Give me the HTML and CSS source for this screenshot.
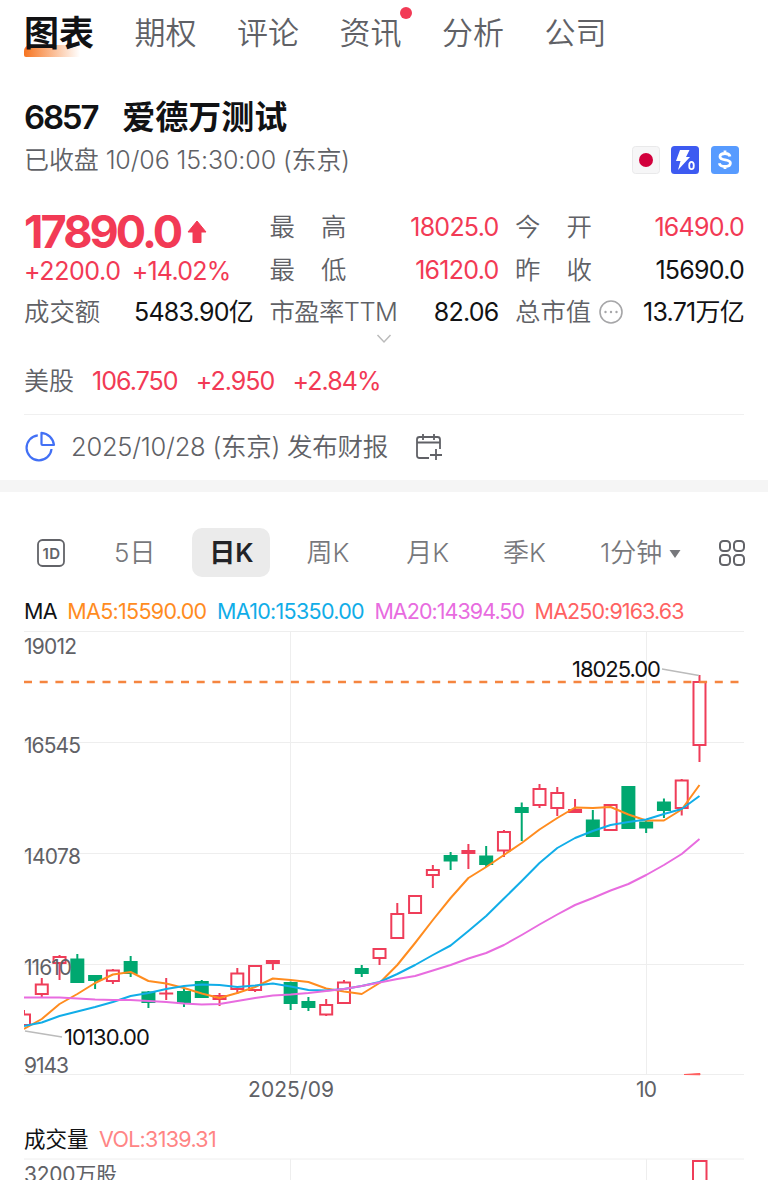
FILE: index.html
```html
<!DOCTYPE html>
<html lang="zh-CN">
<head>
    <meta charset="UTF-8">
    <meta name="viewport" content="width=device-width, initial-scale=1.0">
    <title>6857 爱德万测试</title>
    <link rel="stylesheet" href="styles.css">
</head>
<body>

<!-- Top tabs -->
<nav class="tabs">
    <a class="tab active">图表</a>
    <a class="tab">期权</a>
    <a class="tab">评论</a>
    <a class="tab">资讯<i class="dot"></i></a>
    <a class="tab">分析</a>
    <a class="tab">公司</a>
</nav>

<!-- Stock name and market status -->
<header class="stock">
    <h1><span class="code">6857</span><span>爱德万测试</span></h1>
    <div class="status-row">
        <span class="status">已收盘 10/06 15:30:00 (东京)</span>
        <div class="badges">
            <svg width="28" height="28" viewBox="0 0 28 28">
                <rect x=".5" y=".5" width="27" height="27" rx="3" fill="#f6f6f7" stroke="#e9e9ea"/>
                <circle cx="14" cy="14" r="7" fill="#d2003c"/>
            </svg>
            <svg width="28" height="28" viewBox="0 0 28 28">
                <rect width="28" height="28" rx="3.5" fill="#3d5af1"/>
                <path d="M9 4h9.500l-3.500 7h4L7 24l2.500-9H5z" fill="#fff"/>
                <ellipse cx="20.500" cy="19.500" rx="2.300" ry="3.700" fill="#3d5af1" stroke="#3d5af1" stroke-width="4"/>
                <ellipse cx="20.500" cy="19.500" rx="2.300" ry="3.700" fill="none" stroke="#fff" stroke-width="1.800"/>
            </svg>
            <svg width="28" height="28" viewBox="0 0 28 28">
                <rect width="28" height="28" rx="3.500" fill="#579bff"/>
                <path d="M19 10.500C18.500 8.500 17 7.500 14 7.500c-3 0-5 1.100-5 3.200 0 4.600 10.400 1.700 10.400 6.300 0 2.200-2.200 3.500-5.400 3.500-3.300 0-5.200-1.200-5.700-3.300M14 4.500v3M14 20v3" fill="none" stroke="#fff" stroke-width="2.800"/>
            </svg>
        </div>
    </div>
</header>

<!-- Quote -->
<section class="quote">
    <div class="last">
        <div class="price up">17890.0<svg width="20" height="24" viewBox="0 0 20 24"><path d="M10 1L19 12h-5v10.500H6V12H1z" fill="#f23a55" stroke="#f23a55" stroke-linejoin="round"/></svg></div>
        <div class="change up"><span>+2200.0</span><span>+14.02%</span></div>
        <div class="item"><span class="label">成交额</span><span class="value">5483.90亿</span></div>
    </div>
    <div class="col">
        <div class="item"><span class="label wide">最<b></b>高</span><span class="value up">18025.0</span></div>
        <div class="item"><span class="label wide">最<b></b>低</span><span class="value up">16120.0</span></div>
        <div class="item"><span class="label pe">市盈率TTM</span><span class="value">82.06</span></div>
    </div>
    <div class="col">
        <div class="item"><span class="label wide">今<b></b>开</span><span class="value up">16490.0</span></div>
        <div class="item"><span class="label wide">昨<b></b>收</span><span class="value">15690.0</span></div>
        <div class="item">
            <span class="label">总市值<svg class="more" width="24" height="24" viewBox="0 0 24 24"><circle cx="12" cy="12" r="11" fill="none" stroke="#a6a6a8" stroke-width="1.600"/><g fill="#a6a6a8"><circle cx="6.500" cy="12" r="1.200"/><circle cx="12" cy="12" r="1.200"/><circle cx="17.500" cy="12" r="1.200"/></g></svg></span>
            <span class="value">13.71万亿</span>
        </div>
    </div>
</section>
<div class="expand">
    <svg width="16" height="10" viewBox="0 0 16 10"><path d="M1.500 1L8 8l6.500-7" fill="none" stroke="#bbb" stroke-width="1.500"/></svg>
</div>

<div class="us-quote">
    <span class="label">美股</span>
    <span class="value up">106.750</span>
    <span class="value up">+2.950</span>
    <span class="value up">+2.84%</span>
</div>

<!-- Earnings date -->
<div class="notice">
    <svg width="32" height="32" viewBox="0 0 32 32" fill="none" stroke="#4270f5" stroke-width="2.200">
        <path d="M13.800 4.400A12.500 12.500 0 1 0 27.500 18"/>
        <path d="M17.500 1.800C24 2.300 29.200 7.500 30 14H18.500q-1 0-1-1z" stroke-linejoin="round"/>
    </svg>
    <span class="notice-text">2025/10/28 (东京) 发布财报</span>
    <svg width="28" height="30" viewBox="0 0 28 30" fill="none" stroke="#606166" stroke-width="1.800">
        <path d="M14 26H4.500Q2 26 2 23.500V7.500Q2 5 4.500 5h18Q25 5 25 7.500V17M2 10.500h23M8 2v6M19 2v6M21 17v11M15 23h12"/>
    </svg>
</div>

<!-- Chart periods -->
<nav class="periods">
    <svg class="day-icon" width="28" height="28" viewBox="0 0 28 28">
        <rect x="1" y="1" width="26" height="26" rx="4.500" fill="none" stroke="#626368" stroke-width="1.800"/>
        <text x="5.500" y="19.500" textLength="17.500">1D</text>
    </svg>
    <a class="p-5d">5日</a>
    <a class="current">日K</a>
    <a class="p-week">周K</a>
    <a class="p-month">月K</a>
    <a class="p-season">季K</a>
    <a class="p-min">1分钟<svg width="12" height="8" viewBox="0 0 12 8"><path d="M0.500 0h11L6 8z" fill="#77787c"/></svg></a>
    <svg class="grid-icon" width="28" height="28" viewBox="0 0 28 28" fill="none" stroke="#626368" stroke-width="2">
        <rect x="2" y="2" width="10" height="10" rx="3.500"/>
        <rect x="16" y="2" width="10" height="10" rx="3.500"/>
        <rect x="2" y="16" width="10" height="10" rx="3.500"/>
        <rect x="16" y="16" width="10" height="10" rx="3.500"/>
    </svg>
</nav>

<div class="legend">
    <span>MA</span>
    <span class="ma5">MA5:15590.00</span>
    <span class="ma10">MA10:15350.00</span>
    <span class="ma20">MA20:14394.50</span>
    <span class="ma250">MA250:9163.63</span>
</div>

<!-- Candles, filled in by chart.js -->
<svg class="chart" width="720" height="475" viewBox="24 630 720 475">
    <path class="grid" d="M24 631.500H744M24 742.500H744M24 853.500H744M24 964.500H744M24 1074.500H744M290.500 631V1075M646.500 631V1075"/>
    <g id="candles"></g>
    <path d="M24 682H744" stroke="#f5853f" stroke-width="2.400" stroke-dasharray="8 7.700"/>
    <g id="lines"></g>
    <path d="M684 1074.500L700 1073.500v1.300z" fill="#ff5b5b" stroke="#ff5b5b"/>
    <path d="M662 669L699 675.500M25 1031L62 1037" stroke="#bbb" stroke-width="1.500"/>
    <g class="axis">
        <text x="24" y="653.500" textLength="53">19012</text>
        <text x="24" y="752.500" textLength="57">16545</text>
        <text x="24" y="863.500" textLength="57">14078</text>
        <text x="24" y="974.500" textLength="48">11610</text>
        <text x="24" y="1073" textLength="45">9143</text>
        <text x="248" y="1096.500" textLength="86">2025/09</text>
        <text x="636" y="1096.500" textLength="21">10</text>
    </g>
    <g class="mark">
        <text x="572" y="676.500" textLength="89">18025.00</text>
        <text x="64" y="1045" textLength="86">10130.00</text>
    </g>
</svg>

<!-- Volume -->
<div class="legend volume-legend">
    <span>成交量</span>
    <span class="vol">VOL:3139.31</span>
</div>
<svg class="volume" width="720" height="22" viewBox="24 1158 720 22">
    <path class="grid" d="M24 1159H744M290.500 1159V1180M646.500 1159V1180"/>
    <path d="M693 1182V1161H706.500V1182" fill="#fff" stroke="#ef3d59" stroke-width="2"/>
    <text class="axis" x="24" y="1182" textLength="93">3200万股</text>
</svg>

<script src="chart.js"></script>
</body>
</html>
```
FILE: styles.css
```css
/* styles.css */
body {
    margin: 0;
    width: 768px;
    height: 1181px;
    overflow: hidden;
    background-color: #fff;
    color: #111214;
    font-family: Inter, "Noto Sans CJK SC", sans-serif;
    line-height: 1.2;
}

.up {
    color: #f23a55;
}

.label {
    color: #606166;
}

.value {
    letter-spacing: -0.75px;
}

/* Tabs */
.tabs {
    display: flex;
    align-items: center;
    gap: 40.5px;
    height: 66px;
    padding: 0 24px;
    box-sizing: border-box;
}

.tab {
    position: relative;
    color: #606166;
    font-size: 31px;
    line-height: 46px;
    font-weight: 350;
}

.tab.active {
    color: #111214;
    font-size: 35px;
    font-weight: 700;
    z-index: 0;
}

.tab.active::after {
    content: "";
    position: absolute;
    z-index: -1;
    left: 0;
    bottom: -1px;
    width: 56px;
    height: 12px;
    border-radius: 6px 0 0 2px;
    background: linear-gradient(90deg, #f67420, #fff);
}

.dot {
    position: absolute;
    right: -10px;
    top: -3px;
    width: 12px;
    height: 12px;
    border-radius: 50%;
    background-color: #f23a55;
}

/* Stock header */
.stock {
    padding: 28px 29.5px 0 24px;
}

.stock h1 {
    display: flex;
    gap: 25px;
    margin: 0;
    font-size: 33px;
    line-height: 46px;
    font-weight: 600;
}

.code {
    letter-spacing: -2.2px;
}

.status-row {
    display: flex;
    justify-content: space-between;
    align-items: center;
    height: 40px;
}

.status {
    color: #606166;
    font-size: 25px;
    font-weight: 350;
    letter-spacing: -0.1px;
}

.badges {
    display: flex;
    gap: 11.5px;
}

/* Quote */
.quote {
    display: grid;
    grid-template-columns: 229px 229px 229px;
    column-gap: 16.5px;
    padding: 26px 24px 0;
    font-size: 25px;
}

.item {
    display: flex;
    justify-content: space-between;
    align-items: center;
    height: 42.5px;
    white-space: nowrap;
}

.item .label {
    display: flex;
    align-items: center;
    font-size: 25.4px;
    font-weight: 350;
}

.item .pe {
    letter-spacing: -0.6px;
}

.label.wide b {
    width: 26px;
}

.more {
    margin-left: 8px;
}

.price {
    display: flex;
    align-items: center;
    gap: 7px;
    height: 48px;
    padding-top: 3px;
    box-sizing: border-box;
    font-size: 45px;
    font-weight: 650;
    letter-spacing: -2.9px;
}

.change {
    display: flex;
    gap: 11px;
    height: 37px;
    line-height: 35px;
    letter-spacing: -0.75px;
}

.change span:first-child {
    letter-spacing: -0.4px;
}

.expand {
    display: flex;
    justify-content: center;
    height: 24px;
    line-height: 0;
}

.us-quote {
    display: flex;
    align-items: center;
    gap: 18px;
    height: 56px;
    padding: 0 24px 9px;
    box-sizing: border-box;
    font-size: 25px;
}

.us-quote .label {
    font-weight: 350;
}

.us-quote .value {
    letter-spacing: -0.95px;
}

/* Earnings notice */
.notice {
    display: flex;
    align-items: center;
    height: 65.5px;
    margin: 0 24px;
    border-top: 1px solid #f0f0f0;
}

.notice-text {
    margin: 0 27px 0 15px;
    color: #606166;
    font-size: 25.5px;
    font-weight: 350;
    letter-spacing: -0.25px;
}

/* Periods */
.periods {
    display: flex;
    align-items: center;
    height: 113.5px;
    padding: 20px 22px 0 37px;
    border-top: 12px solid #f5f5f5;
    box-sizing: border-box;
    color: #77787c;
    font-size: 26px;
    font-weight: 350;
}

.day-icon text {
    font-size: 15px;
    font-weight: 600;
    fill: #626368;
}

.periods a {
    white-space: nowrap;
}

.p-5d {
    margin-left: 49px;
}

.periods .current {
    width: 78px;
    margin: 0 36px 0 37px;
    border-radius: 10px;
    background-color: #ebebeb;
    color: #222327;
    line-height: 49px;
    font-weight: 600;
    text-align: center;
}

.periods .p-month {
    margin-left: 57px;
}

.p-season,
.p-min {
    margin-left: 54px;
}

.p-min svg {
    margin-left: 7px;
    vertical-align: 4px;
}

.grid-icon {
    margin-left: auto;
}

/* Legend */
.legend {
    display: flex;
    align-items: center;
    gap: 10.5px;
    height: 36px;
    padding: 0 24px;
    font-size: 21.5px;
    letter-spacing: -0.7px;
    white-space: nowrap;
}

.ma5 {
    color: #ff8c1f;
}

.ma10 {
    color: #11ade8;
}

.ma20 {
    color: #e86cdf;
    letter-spacing: -0.95px;
}

.ma250 {
    color: #ff6262;
    letter-spacing: -0.9px;
}

.vol {
    color: #ff8585;
}

/* Chart */
.chart,
.volume {
    display: block;
    margin-left: 24px;
}

.grid {
    fill: none;
    stroke: #eee;
}

.axis {
    fill: #606166;
    font-size: 21px;
}

.mark {
    fill: #111214;
    font-size: 22px;
}

.red {
    fill: none;
    stroke: #ef3d59;
    stroke-width: 2;
}

.green {
    fill: #00a870;
    stroke: #00a870;
    stroke-width: 2;
}

.line {
    fill: none;
    stroke-width: 2;
    stroke-linejoin: round;
}

.volume-legend {
    height: 53px;
    padding-top: 18px;
    box-sizing: border-box;
}

.volume-legend span:first-child {
    letter-spacing: 0;
}
```
FILE: chart.js
```js
// [color, body top, body bottom, high, low]
const candles = [
    ['red', 1013.5, 1026, 1010, 1026],
    ['red', 983.5, 995, 978, 998],
    ['red', 956, 964, 955, 980],
    ['green', 958.5, 983, 954, 983],
    ['green', 975, 981, 975, 989],
    ['red', 969.5, 982, 969, 984],
    ['green', 961, 974, 956, 977],
    ['green', 991.5, 1003, 991, 1008],
    ['red', 992.5, 994.5, 978, 1000],
    ['green', 991, 1004, 988, 1007],
    ['green', 981, 998, 980, 998],
    ['red', 995, 1000, 993, 1006],
    ['red', 972.5, 990, 968, 994],
    ['red', 965, 991, 965, 992],
    ['red', 960, 964, 960, 970],
    ['green', 982, 1004, 981.5, 1010],
    ['green', 1001, 1008, 997, 1011],
    ['red', 1004, 1015.5, 999, 1016],
    ['red', 981.5, 1004, 980, 1004],
    ['green', 968, 974, 965, 977],
    ['red', 948, 959, 948, 965],
    ['red', 913, 939, 903, 939],
    ['red', 895, 914, 895, 914],
    ['red', 869, 876, 865, 888],
    ['green', 855, 861.5, 852, 870],
    ['red', 850, 854, 844, 869],
    ['green', 855.5, 865, 846, 867],
    ['red', 831, 851.5, 830, 857],
    ['green', 807, 813, 802.5, 841],
    ['red', 788, 806, 784, 808],
    ['red', 792, 809, 787, 816],
    ['red', 809, 813, 799, 813],
    ['green', 819.5, 837, 810, 837],
    ['red', 804, 831, 804, 831],
    ['green', 786, 829, 786, 829],
    ['green', 821.5, 828.5, 821, 833],
    ['green', 801.5, 811, 798.5, 818],
    ['red', 779.5, 809, 779, 815.5],
    ['red', 681, 746, 675, 762]
];

const averages = {
    '#ff8c1f': [1029, 1019, 1004, 994, 983, 974.5, 972, 981, 983.5, 988, 993.5, 998, 993, 987, 978.5, 980, 982, 988.5, 991.5, 994, 983, 965, 943, 920, 898, 878, 867, 855, 843, 829.5, 818, 807.5, 808, 807, 814.5, 820.5, 820.5, 809.5, 785],
    '#11ade8': [1026, 1022.5, 1016, 1011.5, 1007, 1002, 996, 993, 989, 986, 984.5, 985, 987, 985.5, 983.5, 986.5, 990, 990.5, 989, 986, 982, 974, 965, 955, 945.5, 931, 916, 898.5, 881, 863, 848, 838, 831, 825, 822, 819.5, 814, 809, 796],
    '#e86cdf': [997.5, 997.5, 997.5, 998.5, 999.5, 1000, 1000, 1001, 1002, 1003.5, 1004.5, 1004, 1001, 998, 995.5, 994.5, 993, 991, 989, 986, 982.5, 979, 976, 970.5, 965, 958.5, 953, 945, 935, 924.5, 914.5, 905, 898, 890.5, 884, 875, 865, 854, 839]
};

const x = i => 24 + i * 17.776;

document.getElementById('candles').innerHTML = candles.map(([color, top, bottom, high, low], i) => {
    const cx = x(i);
    const height = Math.max(bottom - top - 2, 0.1);
    return `<path class="${color}" d="M${cx} ${high}V${top + 1}M${cx} ${bottom - 1}V${low}M${cx - 6} ${top + 1}h12v${height}h-12z"/>`;
}).join('');

document.getElementById('lines').innerHTML = Object.entries(averages).map(([color, values]) => {
    const points = values.map((y, i) => `${x(i)},${y}`).join(' ');
    return `<polyline class="line" stroke="${color}" points="${points}"/>`;
}).join('');
```
